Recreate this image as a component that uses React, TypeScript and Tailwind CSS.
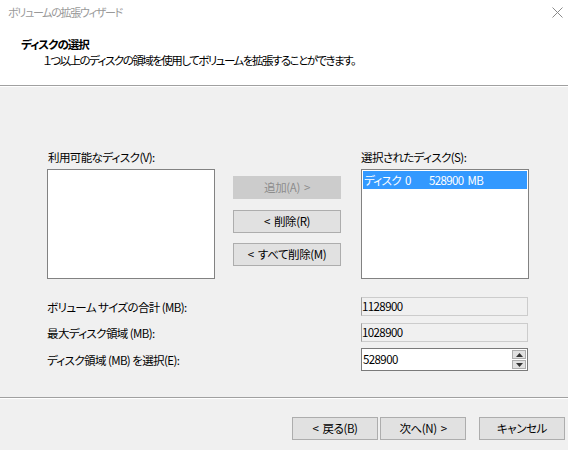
import React from "react";

const font = "font-['Noto_Sans_CJK_JP','Noto_Sans',sans-serif] [font-feature-settings:'palt']";

function Btn({ children, w, disabled }: { children: React.ReactNode; w: string; disabled?: boolean }) {
  return (
    <div
      className={`${w} h-[23px] flex items-center justify-center text-[11.5px] leading-none tracking-[-0.4px] ${
        disabled ? "bg-[#cccccc] text-[#8c8c8c] border border-[#cccccc]" : "bg-[#e1e1e1] text-black border border-[#adadad]"
      }`}
    >
      {children}
    </div>
  );
}

export default function App() {
  return (
    <div className={`w-[568px] h-[450px] bg-[#f0f0f0] flex flex-col text-black text-[11.5px] tracking-[-0.6px] ${font}`}>
      {/* header */}
      <div className="h-[86px] bg-white border-b border-[#a0a0a0] relative">
        <div className="pl-[8px] pt-[4px] leading-[16px] text-[#999999] text-[11px] tracking-[-1.3px]">ボリュームの拡張ウィザード</div>
        <svg className="absolute right-[5px] top-[7px]" width="11" height="11" viewBox="0 0 11 11">
          <path d="M0.5 0.5 L10.5 10.5 M10.5 0.5 L0.5 10.5" stroke="#8a8a8a" strokeWidth="1" />
        </svg>
        <div className="pl-[21px] mt-[16px] leading-[16px] font-bold tracking-[-1px]">ディスクの選択</div>
        <div className="pl-[43px] leading-[16px] tracking-[-1.5px]">１つ以上のディスクの領域を使用してボリュームを拡張することができます。</div>
      </div>
      <div className="h-px bg-white" />

      {/* main */}
      <div className="flex-1 flex flex-col pl-[47px]">
        <div className="flex mt-[62px]">
          <div className="flex flex-col w-[168px]">
            <div className="leading-[16px] pl-[1px]">利用可能なディスク(V):</div>
            <div className="mt-[4px] h-[110px] bg-white border border-[#828282]" />
          </div>
          <div className="flex flex-col ml-[18px] mt-[27px]">
            <Btn w="w-[108px]" disabled>
              追加(A)<span className="ml-[4px]">&gt;</span>
            </Btn>
            <div className="mt-[11px]">
              <Btn w="w-[108px]">
                &lt;<span className="ml-[4px]">削除(R)</span>
              </Btn>
            </div>
            <div className="mt-[10px]">
              <Btn w="w-[108px]">
                &lt;<span className="ml-[4px]">すべて削除(M)</span>
              </Btn>
            </div>
          </div>
          <div className="flex flex-col w-[168px] ml-[20px]">
            <div className="leading-[16px]">選択されたディスク(S):</div>
            <div className="mt-[4px] h-[110px] bg-white border border-[#828282] p-px">
              <div className="h-[18px] bg-[#3399ff] text-white leading-[18px] flex">
                <span className="pl-[1px]">ディスク</span>
                <span className="ml-[4px]">0</span>
                <span className="ml-[18px]">528900</span>
                <span className="ml-[4px]">MB</span>
              </div>
            </div>
          </div>
        </div>

        <div className="flex items-center mt-[18px] h-[19px]">
          <div className="w-[314px] leading-[16px]">ボリューム サイズの合計 (MB):</div>
          <div className="w-[167px] h-[19px] border border-[#cccccc] border-l-[#a0a0a0] bg-[#f0f0f0] leading-[17px]">1128900</div>
        </div>
        <div className="flex items-center mt-[7px] h-[19px]">
          <div className="w-[314px] leading-[16px]">最大ディスク領域 (MB):</div>
          <div className="w-[167px] h-[19px] border border-[#cccccc] border-l-[#a0a0a0] bg-[#f0f0f0] leading-[17px]">1028900</div>
        </div>
        <div className="flex items-center mt-[6px] h-[23px]">
          <div className="w-[314px] leading-[16px]">ディスク領域 (MB) を選択(E):</div>
          <div className="w-[167px] h-[23px] border border-[#7a7a7a] bg-white flex">
            <div className="flex-1 pl-[1px] leading-[20px]">528900</div>
            <div className="w-[16px] flex flex-col p-px gap-px">
              <div className="flex-1 bg-[#e1e1e1] border border-[#adadad] flex items-center justify-center">
                <svg width="7" height="4" viewBox="0 0 7 4"><path d="M3.5 0 L7 4 L0 4 Z" fill="#333" /></svg>
              </div>
              <div className="flex-1 bg-[#e1e1e1] border border-[#adadad] flex items-center justify-center">
                <svg width="7" height="4" viewBox="0 0 7 4"><path d="M0 0 L7 0 L3.5 4 Z" fill="#333" /></svg>
              </div>
            </div>
          </div>
        </div>
      </div>

      {/* footer */}
      <div className="h-px bg-[#a0a0a0]" />
      <div className="h-px bg-white" />
      <div className="h-[51px] flex pl-[292px] pt-[18px]">
        <Btn w="w-[86px]">
          &lt;<span className="ml-[4px]">戻る(B)</span>
        </Btn>
        <div className="ml-[2px]">
          <Btn w="w-[86px]">
            次へ(N)<span className="ml-[4px]">&gt;</span>
          </Btn>
        </div>
        <div className="ml-[13px]">
          <Btn w="w-[86px]">キャンセル</Btn>
        </div>
      </div>
    </div>
  );
}
